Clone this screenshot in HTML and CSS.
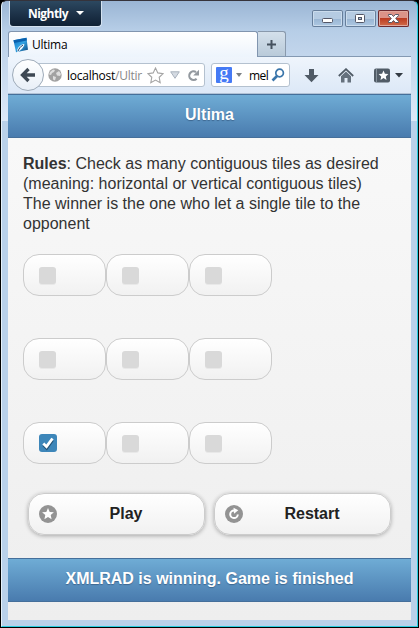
FILE: index.html
```
<!DOCTYPE html>
<html lang="en">
<head>
	<meta charset="UTF-8">
	<title>Ultima</title>
	<link rel="stylesheet" href="styles.css">
</head>
<body>
	<div class="window">
		<div class="titlebar">
			<div class="nightly"><span>Nightly</span><i class="caret"></i></div>
			<div class="controls">
				<div class="ctl"><svg width="31" height="17"><rect x="10.500" y="8.500" width="10" height="4" rx="1" fill="#fff" stroke="#535666"/></svg></div>
				<div class="ctl"><svg width="31" height="17"><rect x="10.500" y="4.500" width="9" height="8" rx="1" fill="#fff" stroke="#535666"/><rect x="13.500" y="7.500" width="3" height="2" fill="#a9c2dc" stroke="#535666"/></svg></div>
				<div class="ctl close"><svg width="31" height="17"><path d="M10.500 4.500h3.200l1.800 2 1.800-2h3.200v1.200l-2.800 2.800 2.800 2.800v1.200h-3.200l-1.800-2-1.800 2h-3.200v-1.200l2.800-2.800-2.800-2.800z" fill="#fff" stroke="#535666"/></svg></div>
			</div>
		</div>
		<div class="tabs">
			<div class="tab">
				<svg class="favicon" width="16" height="16" viewBox="0 0 16 16">
					<defs><linearGradient id="fav" x1="0" y1="0" x2="1" y2="1"><stop offset="0" stop-color="#0869ba"/><stop offset=".5" stop-color="#35a5e5"/><stop offset="1" stop-color="#0b4177"/></linearGradient></defs>
					<path d="M.5 3.200L13.500.8l1.500 12-12 2.400z" fill="url(#fav)"/>
					<path d="M.5 3.200L13.500.8l.4 2.700L1.100 6z" fill="#0a61ae"/>
					<path d="M4 14.500c0-3 2-6 6-7.500l1.500.5c-1 3-3 5-6 7.300z" fill="#eff9ff"/>
					<path d="M5 14c1-2.500 2.500-4.500 5-6" fill="none" stroke="#113a65"/>
				</svg>
				<span>Ultima</span>
			</div>
			<div class="newtab"><svg width="11" height="11"><path d="M4.500 1h2v3.500H10v2H6.500V10h-2V6.500H1v-2h3.500z" fill="#46525f"/></svg></div>
		</div>
		<div class="toolbar">
			<div class="back"><svg width="16" height="16" viewBox="0 0 16 16"><path d="M8.500 2L2.500 8l6 6M3 8h12" fill="none" stroke="#3e4853" stroke-width="3.300"/></svg></div>
			<div class="urlbar">
				<svg class="globe" width="14" height="14" viewBox="0 0 14 14"><circle cx="7" cy="7" r="6.700" fill="#a2a2a2"/><path d="M2 4l3-2.500 2 .5-1 2-2 1-1 2-2-.5zM8 5l3-2 2 3-1 2-3-.5zM5 8l3 1-1 3.500-2-1z" fill="#dedede"/></svg>
				<span class="url">localhost<em>/Ultir</em></span>
				<svg class="star" width="17" height="17" viewBox="0 0 17 17"><path d="M8.500 1l2.300 4.900 5.300.7-3.900 3.700 1 5.400-4.700-2.600-4.700 2.600 1-5.400L.9 6.600l5.300-.7z" fill="#fff" stroke="#a4a4a4" stroke-width="1.100"/></svg>
				<svg class="drop" width="10" height="8"><path d="M.7.800h8.600L5 7.300z" fill="#d4dae2" stroke="#a9b2bd"/></svg>
				<svg class="reload" width="13" height="13" viewBox="0 0 13 13"><path d="M9.600 9.700A4.300 4.300 0 1 1 9 3.100" fill="none" stroke="#93999f" stroke-width="2.100"/><path d="M12 .7v5.800H6.200z" fill="#93999f"/></svg>
			</div>
			<div class="search">
				<span class="engine">g</span>
				<svg class="engine-drop" width="6" height="4"><path d="M0 0h6L3 4z" fill="#7b8085"/></svg>
				<span class="term">mel</span>
				<svg width="14" height="14" viewBox="0 0 14 14"><path d="M6 8L1.500 12.500" stroke="#3a75aa" stroke-width="2.600"/><circle cx="8.600" cy="5" r="3.800" fill="#fff" stroke="#3a75aa" stroke-width="1.700"/></svg>
			</div>
			<svg class="download" width="15" height="15" viewBox="0 0 15 15"><path d="M5 1h5v6h4.500L7.500 14.300.5 7H5z" fill="#505b66"/></svg>
			<svg class="home" width="16" height="15" viewBox="0 0 16 15"><path d="M.8 8L8 1.200 15.200 8" fill="none" stroke="#505b66" stroke-width="1.800"/><path d="M3 8.300l5-4.700 5 4.700V14.500H9.500V10h-3v4.500H3z" fill="#65717d"/></svg>
			<svg class="marks" width="16" height="15" viewBox="0 0 16 15"><rect y=".5" width="16" height="14" rx="2" fill="#515c67"/><path d="M2.500 1v13" stroke="#84909b"/><path d="M9.500 2.500l1.400 3.200 3.500.4-2.600 2.300.7 3.500-3-1.800-3 1.800.7-3.500-2.600-2.300 3.500-.4z" fill="#fff"/></svg>
			<svg class="marks-drop" width="8" height="5"><path d="M0 0h8L4 4.500z" fill="#333b43"/></svg>
		</div>

		<div class="page">
			<div class="bar">Ultima</div>
			<div class="content">
				<p><b>Rules</b>: Check as many contiguous tiles as desired<br>(meaning: horizontal or vertical contiguous tiles)<br>The winner is the one who let a single tile to the<br>opponent</p>
				<div class="board">
					<div class="tile"><i class="box"></i></div>
					<div class="tile"><i class="box"></i></div>
					<div class="tile"><i class="box"></i></div>
					<div class="tile"><i class="box"></i></div>
					<div class="tile"><i class="box"></i></div>
					<div class="tile"><i class="box"></i></div>
					<div class="tile"><i class="box on"><svg width="18" height="18"><path d="M4.500 10l3.200 3.200 5.800-8" transform="translate(0 1)" fill="none" stroke="#225276" stroke-width="3"/><path d="M4.300 9.500l3.200 3.200 6-8.200" fill="none" stroke="#fff" stroke-width="2.800"/></svg></i></div>
					<div class="tile"><i class="box"></i></div>
					<div class="tile"><i class="box"></i></div>
				</div>
				<div class="buttons">
					<div class="btn">
						<svg width="18" height="18"><circle cx="9" cy="9" r="9" fill="#939393"/><path d="M9 3l1.700 3.900 4.200.4-3.200 2.800.9 4.200L9 12.100l-3.600 2.200.9-4.200-3.200-2.800 4.200-.4z" fill="#fff"/></svg>
						<span>Play</span>
					</div>
					<div class="btn">
						<svg width="18" height="18"><circle cx="9" cy="9" r="9" fill="#939393"/><path d="M12.800 9.500A3.800 3.800 0 1 1 9 5.500" fill="none" stroke="#fff" stroke-width="2"/><path d="M8.500 2.700l4.800 2.500-4.300 3.600z" fill="#fff"/></svg>
						<span>Restart</span>
					</div>
				</div>
			</div>
			<div class="bar">XMLRAD is winning. Game is finished</div>
		</div>
	</div>
</body>
</html>
```
FILE: styles.css
```
*{margin:0;padding:0;box-sizing:border-box;}
body{
	background:#000;
	overflow:hidden;
}
svg{
	display:block;
	flex:none;
}
.window{
	width:417px;
	height:627px;
	margin-left:1px;
	padding:0 6px 6px;
	border:1px solid #28ccdf;
	border-top-color:#35333b;
	border-left-color:#e5f1fa;
	border-radius:6px 6px 0 0;
	background:linear-gradient(#9ab5d4 0,#b7cee7 30px,#c3d6ec 56px,#dce8f7 120px,#b9d1ea 120px);
	font-family:"Open Sans","Noto Sans",sans-serif;
	font-size:12px;
	color:#000;
}
.titlebar{
	display:flex;
	justify-content:space-between;
	height:30px;
}
.nightly{
	display:flex;
	align-items:center;
	width:93px;
	height:26px;
	margin-left:1px;
	padding:0 0 1px 18px;
	border:1px solid #d4e2f0;
	border-top:0;
	border-radius:0 0 4px 4px;
	background:linear-gradient(#2c4860,#1b2f45 60%,#0f2134);
	color:#fff;
	font-weight:bold;
	font-size:12px;
	letter-spacing:-.55px;
}
.caret{
	margin-left:8px;
	border:4px solid transparent;
	border-top:4px solid #fff;
	border-bottom:0;
}
.controls{
	display:flex;
	gap:2px;
	padding:9px 2px 0 0;
}
.ctl{
	width:31px;
	height:17px;
	border-radius:2px;
	box-shadow:inset 0 0 0 1px #667e9b,inset 0 0 0 2px #cbdced;
	background:linear-gradient(#b5cbe2 50%,#98b4d2 50%,#b0cae4);
}
.close{
	box-shadow:inset 0 0 0 1px #6c2a30,inset 0 0 0 2px #e0a89d;
	background:linear-gradient(#dc9388 45%,#bc3c22 50%,#d37250);
}
.tabs{
	display:flex;
	height:26px;
	border-bottom:1px solid #8499b2;
}
.tab{
	display:flex;
	align-items:center;
	width:250px;
	height:26px;
	padding-left:4px;
	border:1px solid #8195af;
	border-bottom:0;
	border-radius:3px 3px 0 0;
	background:linear-gradient(#fff,#edf4fc);
}
.tab span{
	margin-left:3px;
	letter-spacing:-.25px;
}
.newtab{
	display:flex;
	align-items:center;
	justify-content:center;
	width:28px;
	height:25px;
	border:1px solid #8999ac;
	border-left:0;
	border-bottom:0;
	border-radius:0 3px 0 0;
	background:linear-gradient(#d4e0eb,#b9cad9);
}
.toolbar{
	display:flex;
	align-items:center;
	height:37px;
	padding-left:4px;
	border-bottom:1px solid #b1c2d5;
	background:linear-gradient(#eff5fc,#dce8f7);
}
.back{
	display:flex;
	align-items:center;
	justify-content:center;
	flex:none;
	width:32px;
	height:32px;
	border:1px solid #9eabb9;
	border-radius:50%;
	background:linear-gradient(#fff,#e8eff7);
	z-index:1;
}
.urlbar,.search{
	display:flex;
	align-items:center;
	flex:none;
	height:24px;
	border:1px solid #b4c1cf;
	border-radius:3px;
	background:#fff;
}
.urlbar{
	width:169px;
	margin-left:-8px;
	padding-left:11px;
}
.url{
	width:76px;
	margin-left:5px;
	overflow:hidden;
	white-space:nowrap;
	letter-spacing:-.25px;
}
.url em{
	font-style:normal;
	color:#888;
}
.star{margin-left:4px;}
.drop{margin-left:6px;}
.reload{margin-left:7px;}
.search{
	width:79px;
	margin-left:6px;
	padding-left:4px;
}
.engine{
	width:16px;
	height:16px;
	border-radius:1px;
	background:#457af5;
	color:#fff;
	font:19px/11px "Liberation Serif",serif;
	text-align:center;
}
.engine-drop{margin-left:4px;}
.term{
	width:20px;
	margin:0 2px 0 7px;
	letter-spacing:-.5px;
}
.download{margin-left:14px;}
.home{margin-left:19px;}
.marks{margin-left:20px;}
.marks-drop{margin-left:5px;}

/* page */
.page{
	height:526px;
	background:linear-gradient(#f9f9f9,#eee);
	font:16px/20px "Liberation Sans",Arial,sans-serif;
	color:#333;
}
.bar{
	height:44px;
	border:1px solid #456f9a;
	border-width:1px 0;
	background:linear-gradient(#6facd5,#497bae);
	color:#fff;
	font-weight:bold;
	line-height:40px;
	text-align:center;
	text-shadow:0 1px 1px #3e6790;
}
.content{
	height:420px;
	padding:16px 15px 0;
}
.content p{
	height:100px;
	white-space:nowrap;
}
.board{
	display:grid;
	grid-template-columns:repeat(3,83px);
	row-gap:42px;
}
.tile{
	height:42px;
	padding:12px 15px;
	border:1px solid #ccc;
	border-radius:16px;
	background:linear-gradient(#fff,#f1f1f1);
}
.box{
	display:block;
	width:17px;
	height:17px;
	border-radius:3px;
	background:#d9d9d9;
	box-shadow:0 1px 0 #e8e8e8;
}
.box.on{
	width:18px;
	height:18px;
	margin-top:-1px;
	background:#3d86b9;
	box-shadow:none;
}
.buttons{
	display:flex;
	gap:9px;
	padding:29px 5px 0;
}
.btn{
	display:flex;
	align-items:center;
	flex:none;
	width:177px;
	height:42px;
	padding:0 10px;
	border:1px solid #ccc;
	border-radius:16px;
	background:linear-gradient(#fff,#f1f1f1);
	box-shadow:0 1px 4px rgba(0,0,0,.3);
	color:#222;
	font-weight:bold;
}
.btn span{
	flex:1;
	padding-left:1px;
	text-align:center;
}
```
